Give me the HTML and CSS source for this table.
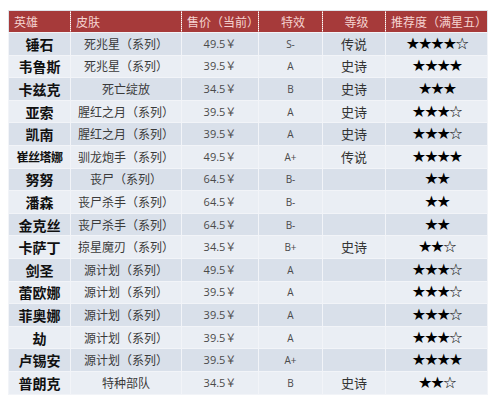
FILE: index.html
```html
<!DOCTYPE html>
<html lang="zh">
<head>
<meta charset="utf-8">
<link rel="stylesheet" href="styles.css">
</head>
<body>
<table class="skins">
  <colgroup>
    <col class="c-hero"><col class="c-skin"><col class="c-price"><col class="c-fx"><col class="c-level"><col class="c-rec">
  </colgroup>
  <thead>
    <tr>
      <th class="left">英雄</th>
      <th class="left">皮肤</th>
      <th class="left">售价（当前）</th>
      <th>特效</th>
      <th>等级</th>
      <th class="left">推荐度（满星五）</th>
    </tr>
  </thead>
  <tbody>
    <tr><td class="hero">锤石</td><td class="skin">死兆星（系列）</td><td class="price">49.5￥</td><td class="fx">S-</td><td class="level">传说</td><td class="stars">★★★★☆</td></tr>
    <tr><td class="hero">韦鲁斯</td><td class="skin">死兆星（系列）</td><td class="price">39.5￥</td><td class="fx">A</td><td class="level">史诗</td><td class="stars">★★★★</td></tr>
    <tr><td class="hero">卡兹克</td><td class="skin">死亡绽放</td><td class="price">34.5￥</td><td class="fx">B</td><td class="level">史诗</td><td class="stars">★★★</td></tr>
    <tr><td class="hero">亚索</td><td class="skin">腥红之月（系列）</td><td class="price">39.5￥</td><td class="fx">A</td><td class="level">史诗</td><td class="stars">★★★☆</td></tr>
    <tr><td class="hero">凯南</td><td class="skin">腥红之月（系列）</td><td class="price">39.5￥</td><td class="fx">A</td><td class="level">史诗</td><td class="stars">★★★☆</td></tr>
    <tr><td class="hero narrow">崔丝塔娜</td><td class="skin">驯龙炮手（系列）</td><td class="price">49.5￥</td><td class="fx">A+</td><td class="level">传说</td><td class="stars">★★★★</td></tr>
    <tr><td class="hero">努努</td><td class="skin">丧尸（系列）</td><td class="price">64.5￥</td><td class="fx">B-</td><td class="level"></td><td class="stars">★★</td></tr>
    <tr><td class="hero">潘森</td><td class="skin">丧尸杀手（系列）</td><td class="price">64.5￥</td><td class="fx">B-</td><td class="level"></td><td class="stars">★★</td></tr>
    <tr><td class="hero">金克丝</td><td class="skin">丧尸杀手（系列）</td><td class="price">64.5￥</td><td class="fx">B-</td><td class="level"></td><td class="stars">★★</td></tr>
    <tr><td class="hero">卡萨丁</td><td class="skin">掠星魔刃（系列）</td><td class="price">34.5￥</td><td class="fx">B+</td><td class="level">史诗</td><td class="stars">★★☆</td></tr>
    <tr><td class="hero">剑圣</td><td class="skin">源计划（系列）</td><td class="price">49.5￥</td><td class="fx">A</td><td class="level"></td><td class="stars">★★★☆</td></tr>
    <tr><td class="hero">蕾欧娜</td><td class="skin">源计划（系列）</td><td class="price">39.5￥</td><td class="fx">A</td><td class="level"></td><td class="stars">★★★☆</td></tr>
    <tr><td class="hero">菲奥娜</td><td class="skin">源计划（系列）</td><td class="price">39.5￥</td><td class="fx">A</td><td class="level"></td><td class="stars">★★★☆</td></tr>
    <tr><td class="hero">劫</td><td class="skin">源计划（系列）</td><td class="price">39.5￥</td><td class="fx">A</td><td class="level"></td><td class="stars">★★★☆</td></tr>
    <tr><td class="hero">卢锡安</td><td class="skin">源计划（系列）</td><td class="price">39.5￥</td><td class="fx">A+</td><td class="level"></td><td class="stars">★★★★</td></tr>
    <tr><td class="hero">普朗克</td><td class="skin">特种部队</td><td class="price">34.5￥</td><td class="fx">B</td><td class="level">史诗</td><td class="stars">★★☆</td></tr>
  </tbody>
</table>
</body>
</html>
```

FILE: styles.css
```css
html, body {
  margin: 0;
  padding: 0;
  background: #ffffff;
}

body {
  padding: 10px 0 0 8px;
  font-family: "Noto Sans CJK SC", "Noto Sans", sans-serif;
}

.skins {
  table-layout: fixed;
  width: 479px;
  border-collapse: collapse;
  border: 1px solid #dfe3e9;
}

.c-hero { width: 62px; }
.c-skin { width: 111px; }
.c-price { width: 77px; }
.c-fx { width: 64px; }
.c-level { width: 63px; }
.c-rec { width: 102px; }

.skins thead tr {
  height: 22px;
}

.skins tbody tr {
  height: 22.6px;
}

.skins th {
  padding: 0 0 0 5px;
  background: #a63a3a;
  color: #f5d3d0;
  font-size: 12px;
  font-weight: normal;
  text-align: center;
  border-left: 1px dotted #d9a3a0;
  border-right: 1px dotted #d9a3a0;
  line-height: 14px;
  white-space: nowrap;
  overflow: hidden;
}

.skins th.left {
  text-align: left;
}

.skins td {
  padding: 0;
  text-align: center;
  border: 1px solid #f2f4f8;
  line-height: 14px;
  white-space: nowrap;
  overflow: hidden;
}

.skins tbody tr:nth-child(odd) td {
  background: #d9e0ea;
}

.skins tbody tr:nth-child(even) td {
  background: #eaeef4;
}

.hero {
  font-size: 14px;
  font-weight: bold;
  color: #111111;
}

.hero.narrow {
  font-size: 12px;
  letter-spacing: -0.5px;
}

.skin {
  font-size: 12px;
  color: #3a3a3a;
}

.price {
  font-family: "Open Sans", "Noto Sans CJK SC", sans-serif;
  font-size: 11px;
  color: #4a4a4a;
}

.fx {
  font-family: "Open Sans", sans-serif;
  font-size: 10px;
  color: #4a4a4a;
}

.level {
  font-size: 13px;
  color: #333333;
}

.stars {
  font-family: "DejaVu Sans", sans-serif;
  font-size: 16px;
  color: #000000;
  letter-spacing: -2px;
  padding-left: 2px;
}
```
